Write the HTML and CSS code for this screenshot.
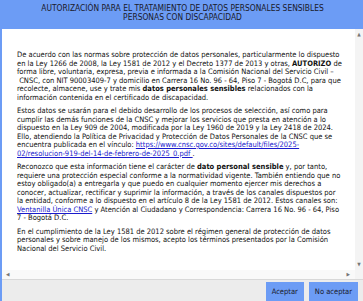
FILE: index.html
```html
<!DOCTYPE html>
<html lang="es">
<head>
    <meta charset="UTF-8">
    <meta name="viewport" content="width=device-width, initial-scale=1.0">
    <title>Autorización datos sensibles</title>
    <link rel="stylesheet" href="styles.css">
</head>
<body>
    <div class="dialog">
        <div class="header">
            AUTORIZACIÓN PARA EL TRATAMIENTO DE DATOS PERSONALES SENSIBLES<br>
            PERSONAS CON DISCAPACIDAD
        </div>
        <div class="scroll-box">
            <div class="content">
                <p>De acuerdo con las normas sobre protección de datos personales, particularmente lo dispuesto en la Ley 1266 de 2008, la Ley 1581 de 2012 y el Decreto 1377 de 2013 y otras, <b>AUTORIZO</b> de forma libre, voluntaria, expresa, previa e informada a la Comisión Nacional del Servicio Civil –&nbsp;CNSC, con NIT 90003409-7 y domicilio en Carrera 16 No. 96 - 64, Piso 7 - Bogotá D.C, para que recolecte, almacene, use y trate mis <b>datos personales sensibles</b> relacionados con la información contenida en el certificado de discapacidad.</p>
                <p>Estos datos se usarán para el debido desarrollo de los procesos de selección, así como para cumplir las demás funciones de la CNSC y mejorar los servicios que presta en atención a lo dispuesto en la Ley 909 de 2004, modificada por la Ley 1960 de 2019 y la Ley 2418 de 2024. Ello, atendiendo la Política de Privacidad y Protección de Datos Personales de la CNSC que se encuentra publicada en el vínculo: <a href="#">https://www.cnsc.gov.co/sites/default/files/2025-02/resolucion-919-del-14-de-febrero-de-2025_0.pdf </a>.</p>
                <p>Reconozco que esta información tiene el carácter de <b>dato personal sensible</b> y, por tanto, requiere una protección especial conforme a la normatividad vigente. También entiendo que no estoy obligado(a) a entregarla y que puedo en cualquier momento ejercer mis derechos a conocer, actualizar, rectificar y suprimir la información, a través de los canales dispuestos por la entidad, conforme a lo dispuesto en el artículo 8 de la Ley 1581 de 2012. Estos canales son: <a href="#">Ventanilla Única CNSC</a> y Atención al Ciudadano y Correspondencia: Carrera 16 No. 96 - 64, Piso 7 - Bogotá D.C.</p>
                <p>En el cumplimiento de la Ley 1581 de 2012 sobre el régimen general de protección de datos personales y sobre manejo de los mismos, acepto los términos presentados por la Comisión Nacional del Servicio Civil.</p>
            </div>
            <div class="vbar">
                <span class="arrow">&#9650;</span>
                <span class="arrow">&#9660;</span>
            </div>
            <div class="hbar">
                <span class="arrow">&#9664;</span>
                <span class="arrow">&#9654;</span>
            </div>
            <div class="corner"></div>
        </div>
        <div class="footer">
            <button class="btn">Aceptar</button>
            <button class="btn">No aceptar</button>
        </div>
    </div>
</body>
</html>
```

FILE: styles.css
```css
body {
    margin: 0;
    padding: 0;
    font-family: "DejaVu Sans Condensed", "DejaVu Sans", sans-serif;
    font-size: 7.5px;
    color: #111;
    background: #fff;
}
.dialog {
    height: 301px;
    display: flex;
    flex-direction: column;
    border-left: 2px solid #6c9cf5;
    box-sizing: border-box;
}
.header {
    height: 29px;
    box-sizing: border-box;
    padding-top: 4px;
    background-color: #6c9cf5;
    color: #1a1a2a;
    text-align: center;
    font-size: 8.4px;
    line-height: 9px;
}
.scroll-box {
    flex: 1;
    display: grid;
    grid-template-columns: 1fr 8px;
    grid-template-rows: 1fr 9px;
    min-height: 0;
    border-bottom: 1px solid #d8d8d8;
}
.content {
    padding: 22px 12px 0 15px;
    line-height: 8.5px;
    overflow: hidden;
}
.content p {
    margin: 0 0 5px;
}
.content a {
    color: #1a1acc;
}
.vbar {
    background: #f4f4f4;
    display: flex;
    flex-direction: column;
    justify-content: space-between;
    align-items: center;
    padding: 3px 0;
}
.hbar {
    background: #f9f9f9;
    display: flex;
    justify-content: space-between;
    align-items: center;
    padding: 0 5px 0 4px;
}
.corner {
    background: #f4f4f4;
}
.arrow {
    font-size: 5px;
    color: #777;
    line-height: 5px;
}
.footer {
    height: 21px;
    background: #ececec;
    display: flex;
    justify-content: flex-end;
    align-items: flex-end;
    gap: 5px;
    padding-right: 5px;
}
.btn {
    height: 19px;
    padding: 0 6px;
    border: none;
    background-color: #6c9cf5;
    color: #1a1a2a;
    font-family: inherit;
    font-size: 7.5px;
}
```
